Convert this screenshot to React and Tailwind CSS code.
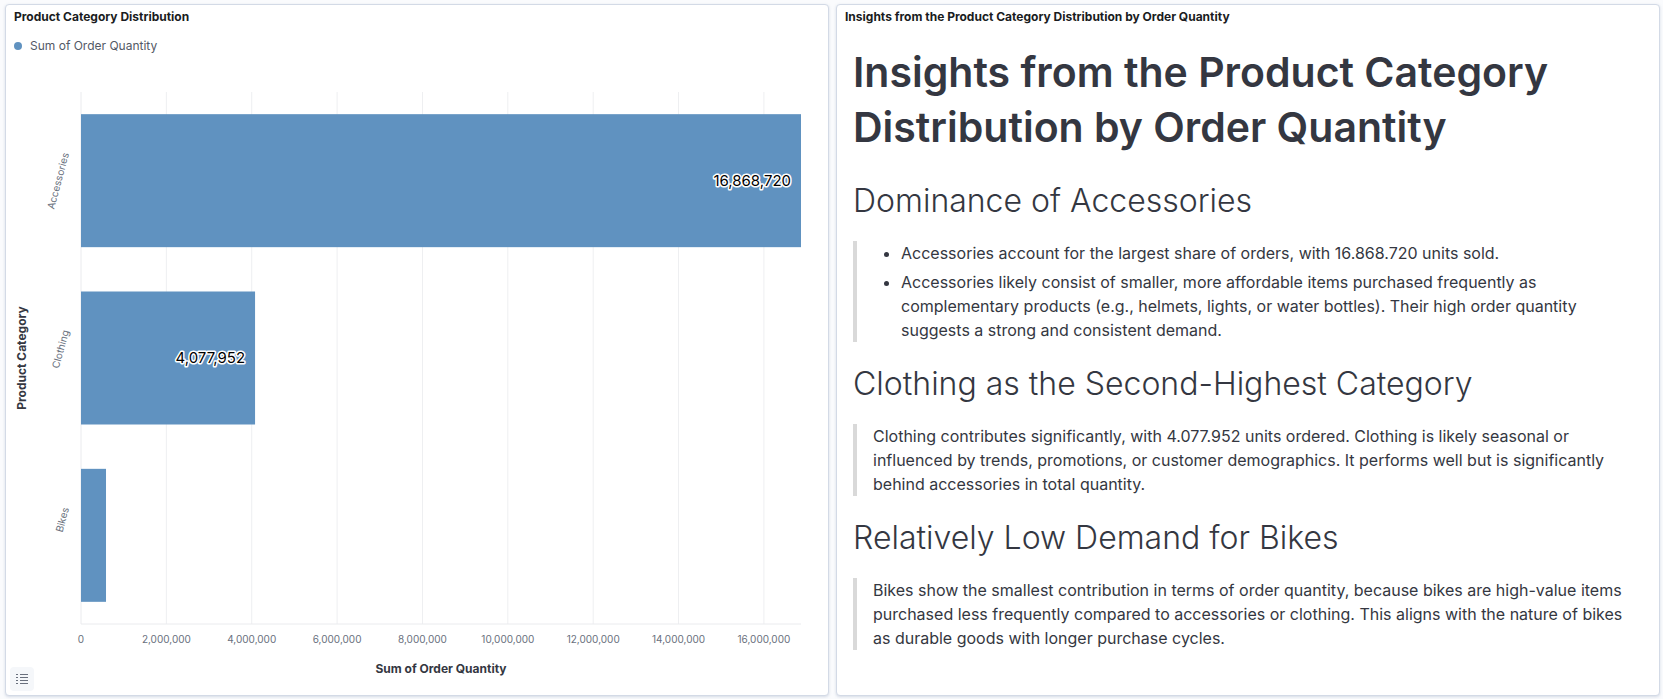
const MAX = 16868720;
const PLOT = { left: 75, right: 795, top: 29, bottom: 561 };
const BAND = (PLOT.bottom - PLOT.top) / 3;
const BAR_HEIGHT = BAND * 0.75;

const CATEGORIES = [
  { name: "Accessories", value: 16868720, label: "16,868,720" },
  { name: "Clothing", value: 4077952, label: "4,077,952" },
  { name: "Bikes", value: 586000, label: null },
];

const TICKS = [0, 2, 4, 6, 8, 10, 12, 14, 16].map((n) => n * 1000000);

const scaleX = (value) =>
  PLOT.left + (value / MAX) * (PLOT.right - PLOT.left);

function Panel({ title, children }) {
  return (
    <section className="relative flex min-w-0 flex-1 flex-col rounded border border-[#d3dae6] bg-white shadow-[0_1px_3px_rgba(105,125,160,0.25)]">
      <h2 className="h-6 px-2 text-xs leading-[23px] font-bold text-[#1a1c21]">
        {title}
      </h2>
      {children}
    </section>
  );
}

function BarChart() {
  return (
    <svg
      viewBox="0 0 822 620"
      className="block h-auto w-full"
      role="img"
      aria-label="Sum of Order Quantity by Product Category"
    >
      {TICKS.slice(1).map((tick) => (
        <line
          key={tick}
          x1={scaleX(tick)}
          x2={scaleX(tick)}
          y1={PLOT.top}
          y2={PLOT.bottom}
          stroke="#eeeff1"
        />
      ))}
      <line x1={PLOT.left} x2={PLOT.left} y1={PLOT.top} y2={PLOT.bottom} stroke="#eaebee" />
      <line x1={PLOT.left} x2={PLOT.right} y1={PLOT.bottom} y2={PLOT.bottom} stroke="#eaebee" />

      {CATEGORIES.map((item, i) => {
        const center = PLOT.top + BAND * (i + 0.5);
        return (
          <g key={item.name}>
            <rect
              x={PLOT.left}
              y={center - BAR_HEIGHT / 2}
              width={scaleX(item.value) - PLOT.left}
              height={BAR_HEIGHT}
              fill="#6092c0"
            />
            {item.label && (
              <text
                x={scaleX(item.value) - 10}
                y={center + 5}
                textAnchor="end"
                fontSize="15"
                fill="#000"
                stroke="#fff"
                strokeWidth="3"
                strokeLinejoin="round"
                paintOrder="stroke"
              >
                {item.label}
              </text>
            )}
            <text
              transform={`translate(63 ${center - 27}) rotate(-75)`}
              textAnchor="end"
              fontSize="10"
              fill="#69707d"
            >
              {item.name}
            </text>
          </g>
        );
      })}

      {TICKS.map((tick) => (
        <text
          key={tick}
          x={scaleX(tick)}
          y="580"
          textAnchor="middle"
          fontSize="10"
          fill="#69707d"
        >
          {tick.toLocaleString("en-US")}
        </text>
      ))}

      <text x="435" y="610" textAnchor="middle" fontSize="12" fontWeight="700" fill="#343741">
        Sum of Order Quantity
      </text>
      <text
        transform="translate(20 295) rotate(-90)"
        textAnchor="middle"
        fontSize="12"
        fontWeight="700"
        fill="#343741"
      >
        Product Category
      </text>
    </svg>
  );
}

function ListIcon() {
  return (
    <svg viewBox="0 0 12 12" className="size-3" fill="#69707d" aria-hidden="true">
      {[1, 4, 7, 10].map((y) => (
        <g key={y}>
          <rect x="0" y={y} width="2" height="1" />
          <rect x="4" y={y} width="8" height="1" />
        </g>
      ))}
    </svg>
  );
}

function Insight({ heading, children }) {
  return (
    <>
      <h4 className="mb-5 text-[32px] leading-10 font-light">{heading}</h4>
      <blockquote className="mb-[22px] border-l-4 border-[#d9d9d9] pl-4">
        {children}
      </blockquote>
    </>
  );
}

export default function App() {
  return (
    <main className="flex min-h-screen gap-[7px] bg-[#fafbfd] pt-1 pr-[3px] pb-[3px] pl-[5px] font-['Inter',sans-serif] text-[#343741]">
      <Panel title="Product Category Distribution">
        <div className="flex h-[34px] items-center gap-2 px-2 text-xs text-[#535966]">
          <span className="size-2 rounded-full bg-[#6092c0]" />
          Sum of Order Quantity
        </div>
        <BarChart />
        <button
          type="button"
          aria-label="Toggle legend"
          className="absolute bottom-1 left-1 flex size-6 items-center justify-center rounded bg-[#f5f7fa]"
        >
          <ListIcon />
        </button>
      </Panel>

      <Panel title="Insights from the Product Category Distribution by Order Quantity">
        <article className="px-4 pt-4 text-base leading-6">
          <h3 className="mb-[26px] text-[41px] leading-[55px] font-semibold">
            Insights from the Product Category Distribution by Order Quantity
          </h3>
          <Insight heading="Dominance of Accessories">
            <ul className="list-disc space-y-[5px] pl-7">
              <li>
                Accessories account for the largest share of orders, with
                16.868.720 units sold.
              </li>
              <li>
                Accessories likely consist of smaller, more affordable items
                purchased frequently as complementary products (e.g., helmets,
                lights, or water bottles). Their high order quantity suggests a
                strong and consistent demand.
              </li>
            </ul>
          </Insight>
          <Insight heading="Clothing as the Second-Highest Category">
            <p>
              Clothing contributes significantly, with 4.077.952 units ordered.
              Clothing is likely seasonal or influenced by trends, promotions,
              or customer demographics. It performs well but is significantly
              behind accessories in total quantity.
            </p>
          </Insight>
          <Insight heading="Relatively Low Demand for Bikes">
            <p>
              Bikes show the smallest contribution in terms of order quantity,
              because bikes are high-value items purchased less frequently
              compared to accessories or clothing. This aligns with the nature
              of bikes as durable goods with longer purchase cycles.
            </p>
          </Insight>
        </article>
      </Panel>
    </main>
  );
}
